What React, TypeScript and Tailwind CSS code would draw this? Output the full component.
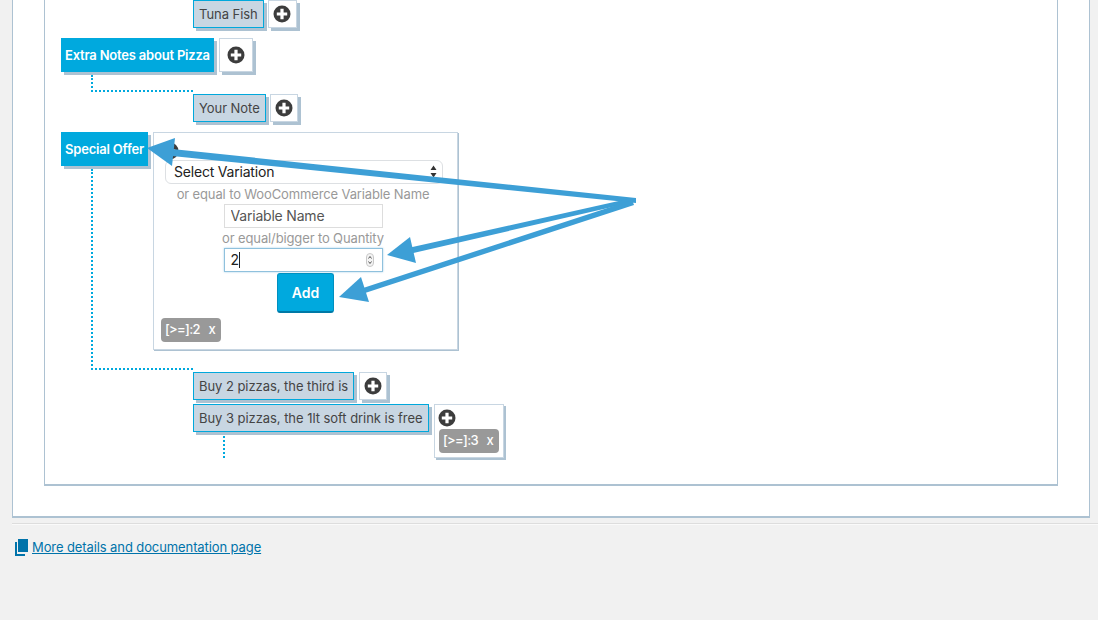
import React from "react";

function Plus({ className = "" }: { className?: string }) {
  return (
    <svg viewBox="0 0 18 18" className={`w-[18px] h-[18px] block ${className}`}>
      <circle cx="9" cy="9" r="8.5" fill="#3c3c3c" />
      <path d="M7.4 3.8h3.2v3.6h3.6v3.2h-3.6v3.6H7.4v-3.6H3.8V7.4h3.6z" fill="#fff" />
    </svg>
  );
}

function Item({ label }: { label: string }) {
  return (
    <div className="h-[28px] px-[5px] pt-[1px] flex items-center bg-[#c8d6e2] border border-[#00a8dc] shadow-[3px_3px_0_#adc2d2] text-[13px] tracking-[-0.05px] text-[#444] whitespace-nowrap">
      {label}
    </div>
  );
}

function Head({ label }: { label: string }) {
  return (
    <div className="w-fit h-[34px] px-[4px] pt-[1px] flex items-center bg-[#00a9de] shadow-[3px_3px_0_#adc2d2] text-[13px] tracking-[-0.2px] font-semibold text-white whitespace-nowrap">
      {label}
    </div>
  );
}

function PlusBox({ className = "" }: { className?: string }) {
  return (
    <div className={`flex items-center justify-center bg-white border border-[#c8d6e2] shadow-[3px_3px_0_#adc2d2] ${className}`}>
      <Plus />
    </div>
  );
}

function Chip({ label }: { label: string }) {
  return (
    <div className="w-[60px] h-[24px] px-[4px] flex items-center justify-between rounded-[4px] bg-[#999] text-[13px] tracking-[-0.7px] font-medium text-white">
      <span>{label}</span>
      <span className="pr-[2px]">x</span>
    </div>
  );
}

function Arrows() {
  const c = "#3d9fd6";
  return (
    <svg className="absolute left-0 top-0 pointer-events-none" width="1098" height="620" viewBox="0 0 1098 620">
      <path d="M172 149 L636 198 L636 203 L172 156 Z" fill={c} />
      <path d="M147 148 L175 138 L172 166 Z" fill={c} />
      <path d="M408 248 L632 198 L634 202 L409 254 Z" fill={c} />
      <path d="M387 255 L410 237 L416 263 Z" fill={c} />
      <path d="M360 289 L632 200 L634 205 L362 294 Z" fill={c} />
      <path d="M339 297 L361 277 L369 302 Z" fill={c} />
    </svg>
  );
}

export default function App() {
  return (
    <div
      className="relative h-[620px] w-[1098px] overflow-hidden bg-[#f1f1f1]"
      style={{ fontFamily: "Inter, 'Liberation Sans', sans-serif" }}
    >
      <div className="ml-[12px] mr-[8px] h-[518px] bg-white border-x border-b-2 border-[#adc2d2] pl-[31px] pr-[31px]">
        <div className="h-[486px] bg-white border-x border-b-2 border-[#adc2d2] pl-[16px]">
          {/* Tuna Fish */}
          <div className="flex items-start gap-[4px] pl-[132px]">
            <Item label="Tuna Fish" />
            <PlusBox className="w-[29px] h-[28px]" />
          </div>

          {/* Extra Notes */}
          <div className="flex items-start gap-[5px] mt-[10px]">
            <Head label="Extra Notes about Pizza" />
            <PlusBox className="w-[34px] h-[34px]" />
          </div>
          <div className="ml-[30px] mt-[3px] w-[102px] h-[17px] border-l-2 border-b-2 border-dotted border-[#00a9de]" />
          <div className="flex items-start gap-[4px] pl-[132px] mt-[2px]">
            <Item label="Your Note" />
            <PlusBox className="w-[28px] h-[28px]" />
          </div>

          {/* Special Offer */}
          <div className="flex items-start mt-[10px]">
            <div className="w-[92px] shrink-0">
              <Head label="Special Offer" />
              <div className="ml-[30px] mt-[3px] w-[102px] h-[201px] border-l-2 border-b-2 border-dotted border-[#00a9de]" />
            </div>
            <div className="w-[305px] h-[218px] bg-white border border-[#c8d6e2] shadow-[1px_1px_0_#adc2d2] pt-[9px] px-[7px]">
              <Plus className="w-[16px] h-[16px]" />
              <div className="relative ml-[4px] mt-0 w-[278px] h-[24px] flex items-center justify-between pl-[8px] pr-[5px] pb-[1px] rounded-[6px] bg-white border border-[#dde0e3] text-[14px] tracking-[-0.2px] text-[#222]">
                <span>Select Variation</span>
                <svg width="7" height="13" viewBox="0 0 7 13">
                  <path d="M3.5 0.5 L6.5 5 L0.5 5 Z M3.5 12.5 L0.5 8 L6.5 8 Z" fill="#333" />
                </svg>
              </div>
              <div className="flex flex-col items-center -mx-[7px] pr-[5px]">
                <div className="mt-[1px] h-[19px] leading-[19px] text-[13px] tracking-[-0.13px] text-[#999] whitespace-nowrap">or equal to WooCommerce Variable Name</div>
                <input
                  readOnly
                  value="Variable Name"
                  className="w-[159px] h-[24px] px-[6px] pb-[1px] bg-white border border-[#dddddd] text-[14px] tracking-[-0.2px] text-[#555] outline-none"
                />
                <div className="mt-[1px] h-[19px] leading-[19px] text-[13px] tracking-[-0.13px] text-[#999] whitespace-nowrap">or equal/bigger to Quantity</div>
                <div className="w-[159px] h-[24px] pl-[6px] pr-[8px] pb-[1px] flex items-center justify-between bg-white border border-[#8fc1dd] shadow-[0_0_2px_#a8d0e8] text-[14px] text-[#222]">
                  <span className="flex items-center">
                    2<span className="inline-block w-px h-[16px] bg-[#222]" />
                  </span>
                  <svg width="8" height="14" viewBox="0 0 8 14">
                    <rect x="0.5" y="0.5" width="7" height="13" rx="3.5" fill="#f4f4f4" stroke="#c8c8c8" />
                    <path d="M2.5 5.5 L4 3.5 L5.5 5.5 M2.5 8.5 L4 10.5 L5.5 8.5" fill="none" stroke="#444" strokeWidth="0.9" />
                  </svg>
                </div>
                <button className="ml-[5px] mt-[1px] w-[57px] h-[40px] rounded-[3px] bg-[#00a9de] border border-[#0090c0] border-b-2 border-b-[#0079a6] text-[14px] font-semibold text-white">
                  Add
                </button>
              </div>
              <div className="mt-[5px]">
                <Chip label="[>=]:2" />
              </div>
            </div>
          </div>

          {/* Offers */}
          <div className="flex items-start gap-[5px] pl-[132px] mt-[2px]">
            <Item label="Buy 2 pizzas, the third is" />
            <PlusBox className="w-[28px] h-[28px]" />
          </div>
          <div className="flex items-start gap-[5px] pl-[132px] mt-[4px]">
            <div className="w-[236px] shrink-0">
              <Item label="Buy 3 pizzas, the 1lt soft drink is free" />
              <div className="ml-[30px] mt-[4px] w-0 h-[22px] border-l-2 border-dotted border-[#00a9de]" />
            </div>
            <div className="w-[70px] h-[54px] bg-white border border-[#c8d6e2] shadow-[2px_2px_0_#adc2d2] pt-[4px] pl-[4px]">
              <Plus className="w-[17px] h-[17px] -ml-px" />
              <div className="mt-[2px]">
                <Chip label="[>=]:3" />
              </div>
            </div>
          </div>
        </div>
      </div>

      {/* Footer */}
      <div className="ml-[12px] mt-[5px] h-[2px] border-t border-b border-t-[#dddddd] border-b-[#fafafa]" />
      <div className="ml-[12px] pt-[13px] pl-[3px] flex items-center gap-[4px]">
        <svg width="13" height="17" viewBox="0 0 13 17" className="shrink-0">
          <path d="M3 0h10v13H3z" fill="#0073aa" />
          <path d="M0 3h2v12h8v2H0z" fill="#0073aa" />
        </svg>
        <a href="#" className="text-[13px] tracking-[-0.1px] text-[#0073aa] underline">More details and documentation page</a>
      </div>

      <Arrows />
    </div>
  );
}
